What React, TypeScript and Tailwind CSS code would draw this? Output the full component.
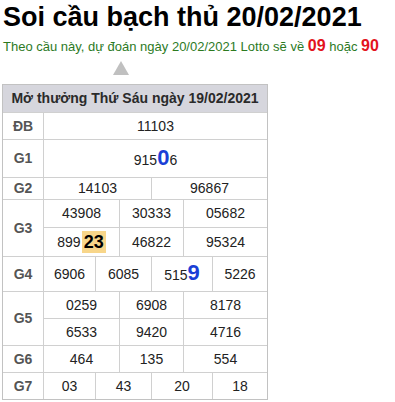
import React from 'react';

type Cell = React.ReactNode;

const Big = ({ children }: { children: React.ReactNode }) => (
  <span className="text-[22px] font-bold text-[#1b3fd6] leading-none">{children}</span>
);

function Row({ label, cells, widths, h }: { label?: string; cells: Cell[]; widths: string[]; h: string }) {
  return (
    <div className={`flex border-t border-[#d0d0d0] ${h}`}>
      {label !== undefined && (
        <div className="w-[41px] shrink-0 border-r border-[#d0d0d0] flex items-center justify-center font-bold text-[#555]">{label}</div>
      )}
      {cells.map((c, i) => (
        <div key={i} className={`${widths[i]} flex items-center justify-center ${i < cells.length - 1 ? 'border-r border-[#d0d0d0]' : ''}`}>
          {c}
        </div>
      ))}
    </div>
  );
}

const W3 = ['w-[76px] shrink-0', 'w-[64px] shrink-0', 'flex-1'];
const W4 = ['w-[52px] shrink-0', 'w-[56px] shrink-0', 'w-[61px] shrink-0', 'flex-1'];
const W2 = ['w-[108px] shrink-0', 'flex-1'];
const W1 = ['flex-1'];

function SubRow({ values, h, top }: { values: string[]; h: string; top?: boolean }) {
  return (
    <div className={`flex ${h} ${top ? 'border-t border-[#d0d0d0]' : ''}`}>
      {values.map((v, i) => (
        <div key={i} className={`${W3[i]} flex items-center justify-center ${i < 2 ? 'border-r border-[#d0d0d0]' : ''}`}>{v}</div>
      ))}
    </div>
  );
}

export default function App() {
  return (
    <div className="w-[395px] h-[402px] bg-white overflow-hidden font-['Liberation_Sans',Arial,sans-serif] text-[#222]">
      <h1 className="pl-[3px] pt-[1px] text-[27px] leading-[33px] font-bold text-black whitespace-nowrap">Soi cầu bạch thủ 20/02/2021</h1>
      <p className="pl-[3px] mt-[2px] text-[13px] leading-[20px] text-[#2d7a1f] whitespace-nowrap">
        Theo cầu này, dự đoán ngày 20/02/2021 Lotto sẽ về <span className="text-[16px] font-bold text-[#e3131c]">09</span> hoặc{' '}
        <span className="text-[16px] font-bold text-[#e3131c]">90</span>
      </p>
      <div className="ml-[113px] mt-[4px] w-0 h-0 border-l-[8px] border-r-[8px] border-b-[14px] border-l-transparent border-r-transparent border-b-[#c0c0c0]" />
      <div className="ml-[2px] mt-[9px] w-[266px] border border-[#c2c2c2] text-[14px]">
        <div className="h-[27px] bg-[#d6d6dd] flex items-center justify-center font-bold text-[#2a2a2a] text-[14px] whitespace-nowrap">
          Mở thưởng Thứ Sáu ngày 19/02/2021
        </div>
        <Row label="ĐB" cells={['11103']} widths={W1} h="h-[27px]" />
        <Row label="G1" cells={[<span>915<Big>0</Big>6</span>]} widths={W1} h="h-[38px]" />
        <Row label="G2" cells={['14103', '96867']} widths={W2} h="h-[22px]" />
        <div className="flex border-t border-[#d0d0d0]">
          <div className="w-[41px] shrink-0 border-r border-[#d0d0d0] flex items-center justify-center font-bold text-[#555]">G3</div>
          <div className="flex-1">
            <SubRow values={['43908', '30333', '05682']} h="h-[27px]" />
            <div className="flex h-[29px] border-t border-[#d0d0d0]">
              <div className="w-[76px] shrink-0 border-r border-[#d0d0d0] flex items-center justify-center">
                899
                <span className="ml-[1px] px-[2px] h-[22px] bg-[#f8d68a] text-[18px] font-bold text-black flex items-center">23</span>
              </div>
              <div className="w-[64px] shrink-0 border-r border-[#d0d0d0] flex items-center justify-center">46822</div>
              <div className="flex-1 flex items-center justify-center">95324</div>
            </div>
          </div>
        </div>
        <Row label="G4" cells={['6906', '6085', <span>515<Big>9</Big></span>, '5226']} widths={W4} h="h-[35px]" />
        <div className="flex border-t border-[#d0d0d0]">
          <div className="w-[41px] shrink-0 border-r border-[#d0d0d0] flex items-center justify-center font-bold text-[#555]">G5</div>
          <div className="flex-1">
            <SubRow values={['0259', '6908', '8178']} h="h-[26px]" />
            <SubRow values={['6533', '9420', '4716']} h="h-[27px]" top />
          </div>
        </div>
        <Row label="G6" cells={['464', '135', '554']} widths={W3} h="h-[27px]" />
        <Row label="G7" cells={['03', '43', '20', '18']} widths={W4} h="h-[27px]" />
      </div>
    </div>
  );
}
